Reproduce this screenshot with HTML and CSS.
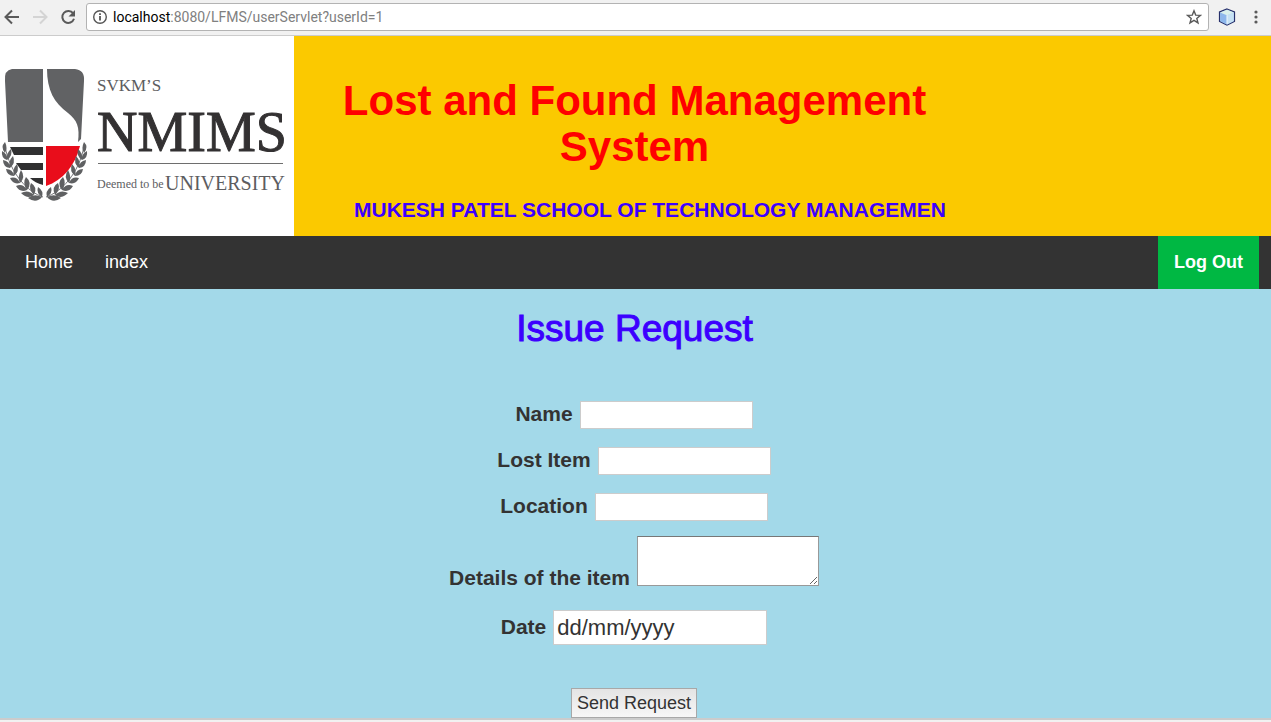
FILE: index.html
```html
<!DOCTYPE html>
<html lang="en">
<head>
<meta charset="utf-8">
<title>Lost and Found Management System</title>
<link rel="stylesheet" href="styles.css">
</head>
<body>
<div class="toolbar">
  <button class="tool" type="button" aria-label="Back">
    <svg width="16" height="16" viewBox="0 0 16 16" fill="none" stroke="#5a5a5a" stroke-width="2"><path d="M15 8H2M8 1.500 1.500 8 8 14.500"/></svg>
  </button>
  <button class="tool" type="button" aria-label="Forward">
    <svg width="16" height="16" viewBox="0 0 16 16" fill="none" stroke="#d4d4d4" stroke-width="2"><path d="M1 8h13M8 1.500 14.500 8 8 14.500"/></svg>
  </button>
  <button class="tool" type="button" aria-label="Reload">
    <svg width="16" height="16" viewBox="0 0 16 16"><path d="M13.200 4.400A6 6 0 1 0 14 9.800" fill="none" stroke="#5a5a5a" stroke-width="2"/><path d="M15 1v6.500H8.500z" fill="#5a5a5a"/></svg>
  </button>
  <div class="address">
    <svg width="16" height="16" viewBox="0 0 16 16"><circle cx="8" cy="8" r="6.300" fill="none" stroke="#555" stroke-width="1.400"/><path d="M7.100 7h1.800v4.500H7.100zM7.100 4.200h1.800v1.700H7.100z" fill="#555"/></svg>
    <span class="url"><span class="host">localhost</span>:8080/LFMS/userServlet?userId=1</span>
    <svg width="16" height="16" viewBox="0 0 16 16" fill="none" stroke="#5a5a5a" stroke-width="1.400"><path d="m8 1.800 1.700 4.300 4.700.3-3.600 3 1.200 4.500L8 11.400l-4 2.500 1.200-4.500-3.600-3 4.700-.3z"/></svg>
  </div>
  <button class="tool" type="button" aria-label="Extension">
    <svg width="18" height="18" viewBox="0 0 18 18"><path d="m9 1 7.500 3v9.500L9 17.200l-7.500-3.700V4z" fill="#a9cdf0" stroke="#27306b" stroke-width="1.200"/><path d="m2.300 4.600 6.700 2.600v9.200l-6.700-3.400z" fill="#8db7ec"/><path d="m9 7.200 6.700-2.600V13L9 16.400z" fill="#c6e1f4"/><path d="m9 1.800 6.700 2.700L9 7.200 2.300 4.500z" fill="#d9f0ec"/><path d="M9 7.200v8.800" stroke="#eef8fc"/></svg>
  </button>
  <button class="tool" type="button" aria-label="Menu">
    <svg width="16" height="16" viewBox="0 0 16 16" fill="#5a5a5a"><circle cx="8" cy="3" r="1.600"/><circle cx="8" cy="8" r="1.600"/><circle cx="8" cy="13" r="1.600"/></svg>
  </button>
</div>

<header class="banner">
  <div class="logo">
    <svg width="294" height="200" viewBox="0 0 294 200" role="img" aria-label="SVKM'S NMIMS Deemed to be University">
      <defs>
        <g id="branch">
          <path d="M43 161C28 156 10 138 5 110" fill="none" stroke="#77787b"/>
          <g fill="#5f6062">
            <path d="M5 117Q0 111 5 106 8 112 5 117z"/>
            <path d="M7 124Q1 122 2 115 8 118 7 124zM7 124Q6 117 11 113 13 120 7 124z"/>
            <path d="M10 132Q3 131 3 124 10 125 10 132zM10 132Q8 125 13 120 16 127 10 132z"/>
            <path d="M14 140Q7 140 6 133 13 133 14 140zM14 140Q12 133 17 128 20 135 14 140z"/>
            <path d="M20 147Q13 149 10 142 17 140 20 147zM20 147Q17 141 21 134 26 141 20 147z"/>
            <path d="M27 154Q20 157 16 150 23 147 27 154zM27 154Q22 147 26 141 33 147 27 154z"/>
            <path d="M34 159Q28 164 21 157 28 153 34 159zM34 159Q28 153 31 147 38 151 34 159z"/>
            <path d="M42 161Q36 168 28 162 34 157 42 161zM42 161Q36 157 38 151 44 155 42 161z"/>
          </g>
        </g>
      </defs>
      <path d="M12 33h31v73H8L5 45Q4 34 12 33z" fill="#616264"/>
      <path d="M47 33h28q10 1 9 12l-3 58-3 3c2-15-1-22-10-29C54 67 47 54 47 33z" fill="#616264"/>
      <path d="M10 111h33v8H14zM16 127h27v7H21zM30 142h13v7q-8-2-13-7z" fill="#303031"/>
      <path d="M46 110h34c-5 20-17 34-34 40z" fill="#e90d1b"/>
      <use href="#branch"/>
      <use href="#branch" transform="translate(89 0) scale(-1 1)"/>
      <g class="logo-text">
        <text x="97" y="55" font-size="17">SVKM’S</text>
        <text class="logo-name" x="97" y="115" font-size="56">NMIMS</text>
        <text x="97" y="152" font-size="12">Deemed to be</text>
        <text x="165" y="154" font-size="20">UNIVERSITY</text>
      </g>
      <path d="M98 127.500h185" stroke="#6e6e6e"/>
    </svg>
  </div>
  <div class="titles">
    <h1 class="title">Lost and Found Management System</h1>
    <p class="school">MUKESH PATEL SCHOOL OF TECHNOLOGY MANAGEMEN</p>
  </div>
</header>

<nav class="menu">
  <a class="menu-link" href="#">Home</a>
  <a class="menu-link" href="#">index</a>
  <a class="menu-link logout" href="#">Log Out</a>
</nav>

<main class="content">
  <h2 class="heading">Issue Request</h2>
  <form class="request">
    <div class="row"><label for="name">Name</label><input class="field" id="name" type="text"></div>
    <div class="row"><label for="item">Lost Item</label><input class="field" id="item" type="text"></div>
    <div class="row"><label for="location">Location</label><input class="field" id="location" type="text"></div>
    <div class="row details-row"><label for="details">Details of the item</label><textarea class="details" id="details"></textarea></div>
    <div class="row"><label for="date">Date</label><input class="field date" id="date" type="text" placeholder="dd/mm/yyyy"></div>
    <button class="send" type="submit">Send Request</button>
  </form>
</main>
</body>
</html>
```
FILE: styles.css
```css
* { box-sizing: border-box; }

body {
  margin: 0;
  background: #f1f1f1;
  color: #333;
  font-family: "Liberation Sans", Arial, sans-serif;
}

.toolbar {
  display: flex;
  align-items: center;
  gap: 12px;
  height: 36px;
  padding: 0 7px 2px 4px;
  background: #f1f1f1;
  border-bottom: 1px solid #ccc;
}

.tool {
  display: flex;
  padding: 0;
  border: 0;
  background: none;
}

.toolbar svg { flex: none; }

.address {
  display: flex;
  flex: 1;
  align-items: center;
  gap: 5px;
  height: 28px;
  margin: 0 -3px 0 -2px;
  padding: 0 6px 0 5px;
  background: #fff;
  border: 1px solid #b3b3b3;
  border-radius: 3px;
}

.url {
  flex: 1;
  color: #808080;
  font-family: Roboto, sans-serif;
  font-size: 14px;
}

.host { color: #000; }

.banner {
  display: grid;
  grid-template-columns: 294px 1fr 296px;
  background: #fbc900;
}

.logo { background: #fff; }
.logo svg { display: block; }

.logo-text {
  fill: #5d5d5f;
  font-family: "Liberation Serif", "Times New Roman", serif;
}

.logo-name {
  fill: #333132;
  stroke: #333132;
  stroke-width: 1px;
}

.titles { padding-top: 42px; }

.title {
  margin: 0;
  color: #f00;
  font-size: 42px;
  line-height: 46px;
  text-align: center;
}

.school {
  margin: 27px 0 0 60px;
  color: #3c00ff;
  font-size: 21px;
  font-weight: bold;
  line-height: 26px;
  white-space: nowrap;
}

.menu {
  display: flex;
  padding: 0 12px 0 9px;
  background: #333;
}

.menu-link {
  padding: 16px;
  color: #fff;
  font-size: 18px;
  line-height: 21px;
  text-decoration: none;
}

.logout {
  margin-left: auto;
  background: #00b843;
  font-weight: bold;
}

.content {
  padding-top: 20px;
  background: #a3d9e9;
  border-bottom: 2px solid #ccc;
}

.heading {
  margin: 0 0 52px;
  padding-right: 2px;
  color: #3c00ff;
  font-size: 37px;
  font-weight: normal;
  line-height: 40px;
  text-align: center;
  -webkit-text-stroke: 1px #3c00ff;
}

.request {
  display: flex;
  flex-direction: column;
  align-items: center;
  gap: 18px;
  padding-right: 3px;
}

.row {
  display: flex;
  align-items: center;
  gap: 7px;
  font-size: 21px;
  font-weight: bold;
  line-height: 24px;
}

.row label { padding-bottom: 2px; }

.details-row {
  align-items: flex-end;
  margin: -3px 0 6px;
}

.details-row label {
  padding: 0;
  line-height: 16px;
}

.field {
  width: 173px;
  height: 28px;
  padding: 0 3px;
  background: #fff;
  border: 1px solid #ccc;
  color: #333;
  font: 22px "Liberation Sans", Arial, sans-serif;
}

.date {
  width: 214px;
  height: 35px;
}

.date::placeholder {
  color: #333;
  opacity: 1;
}

.details {
  display: block;
  width: 182px;
  height: 50px;
  background: #fff;
  border: 1px solid #999;
  border-top-color: #777;
}

.send {
  height: 30px;
  margin-top: 25px;
  padding: 0 5px;
  background: linear-gradient(#e4e4e4, #f7f7f7);
  border: 1px solid #a8a8a8;
  color: #333;
  font: 18px "Liberation Sans", Arial, sans-serif;
}
```
